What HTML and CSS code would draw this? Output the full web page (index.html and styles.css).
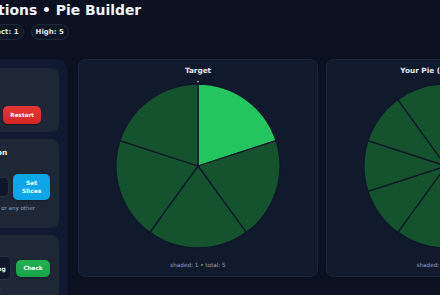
FILE: index.html
```html
<!DOCTYPE html>
<html lang="en">
<head>
<meta charset="utf-8">
<title>Equivalent Fractions • Pie Builder</title>
<link rel="stylesheet" href="styles.css">
</head>
<body>
<div class="app">
  <header class="top">
    <h1 class="title">Equivalent Fractions • Pie Builder</h1>
    <div class="pills">
      <span class="pill">Level: 1</span>
      <span class="pill">Score: 0</span>
      <span class="pill">Correct: 1</span>
      <span class="pill">High: 5</span>
    </div>
  </header>

  <div class="layout">
    <aside class="side">
      <section class="card card-controls">
        <h2 class="card-h">Controls</h2>
        <p class="muted">Build the target.</p>
        <div class="btn-row">
          <button class="btn btn-ghost">Hint</button>
          <button class="btn btn-red">Restart</button>
        </div>
      </section>

      <section class="card">
        <h2 class="card-h">Step 2: Slice Configuration</h2>
        <label class="muted label">Number of slices:</label>
        <div class="field-row">
          <div class="input"></div>
          <button class="btn btn-blue">Set Slices</button>
        </div>
        <p class="muted hint">Enter any whole number from 2 to 12, or any other count.</p>
      </section>

      <section class="card">
        <h2 class="card-h">Your Answer</h2>
        <div class="field-row check-row">
          <div class="status">Click on slices to start shading</div>
          <button class="btn btn-green">Check</button>
        </div>
        <p class="muted hint">Shade the same amount as the target.</p>
      </section>
    </aside>

    <main class="boards">
      <section class="board">
        <h3 class="board-h">Target</h3>
        <svg class="pie" width="172" height="172" viewBox="0 0 172 172">
          <g class="slices">
            <path class="on" d="M86 86 L86 4 A82 82 0 0 1 163.99 60.66 Z"/>
            <path class="off" d="M86 86 L163.99 60.66 A82 82 0 0 1 134.2 152.34 Z"/>
            <path class="off" d="M86 86 L134.2 152.34 A82 82 0 0 1 37.8 152.34 Z"/>
            <path class="off" d="M86 86 L37.8 152.34 A82 82 0 0 1 8.01 60.66 Z"/>
            <path class="off" d="M86 86 L8.01 60.66 A82 82 0 0 1 86 4 Z"/>
          </g>
          <circle class="tick" cx="86" cy="1.6" r="0.8"/>
        </svg>
        <p class="board-foot">shaded: 1 • total: 5</p>
      </section>

      <section class="board">
        <h3 class="board-h">Your Pie (equal slices)</h3>
        <svg class="pie" width="172" height="172" viewBox="0 0 172 172">
          <g class="slices">
            <path class="off" d="M86 86 L86 4 A82 82 0 0 1 134.2 19.66 Z"/>
            <path class="off" d="M86 86 L134.2 19.66 A82 82 0 0 1 163.99 60.66 Z"/>
            <path class="off" d="M86 86 L163.99 60.66 A82 82 0 0 1 163.99 111.34 Z"/>
            <path class="off" d="M86 86 L163.99 111.34 A82 82 0 0 1 134.2 152.34 Z"/>
            <path class="off" d="M86 86 L134.2 152.34 A82 82 0 0 1 86 168 Z"/>
            <path class="off" d="M86 86 L86 168 A82 82 0 0 1 37.8 152.34 Z"/>
            <path class="off" d="M86 86 L37.8 152.34 A82 82 0 0 1 8.01 111.34 Z"/>
            <path class="off" d="M86 86 L8.01 111.34 A82 82 0 0 1 8.01 60.66 Z"/>
            <path class="off" d="M86 86 L8.01 60.66 A82 82 0 0 1 37.8 19.66 Z"/>
            <path class="off" d="M86 86 L37.8 19.66 A82 82 0 0 1 86 4 Z"/>
          </g>
        </svg>
        <p class="board-foot">shaded: 0 • total: 10</p>
      </section>
    </main>
  </div>
</div>
</body>
</html>
```

FILE: styles.css
```css
html, body {
  margin: 0;
  padding: 0;
  overflow: hidden;
  background: #0b1120;
  height: 100%;
}

body {
  font-family: "DejaVu Sans", "Noto Sans", sans-serif;
  color: #e5e7eb;
}

.app {
  margin-left: -135px;
  padding: 2px 12px 0 12px;
  width: 689px;
}

.top {
  display: flex;
  flex-direction: column;
}

.title {
  margin: 0;
  font-size: 13.9px;
  line-height: 17px;
  font-weight: bold;
  color: #f1f5f9;
  white-space: nowrap;
}

.pills {
  display: flex;
  gap: 7px;
  margin-top: 5px;
}

.pill {
  display: inline-flex;
  align-items: center;
  height: 14px;
  padding: 0 4px;
  border: 1px solid #1e293b;
  border-radius: 9px;
  background: #0d1424;
  font-size: 7px;
  font-weight: bold;
  color: #e2e8f0;
  white-space: nowrap;
}

.layout {
  display: grid;
  grid-template-columns: 190px 488px;
  column-gap: 11px;
  margin-top: 19px;
  align-items: start;
}

.side {
  display: flex;
  flex-direction: column;
  gap: 7px;
  padding: 9px 8px 20px 8px;
  background: #0f1a30;
  border-radius: 10px;
  min-height: 300px;
}

.card {
  background: #1e2736;
  border-radius: 8px;
  padding: 9px 9px 8px 9px;
  display: flex;
  flex-direction: column;
}

.card-h {
  margin: 0;
  font-size: 7.5px;
  line-height: 9px;
  font-weight: bold;
  color: #f1f5f9;
  white-space: nowrap;
}

.card-controls .card-h {
  line-height: 10px;
}

.muted {
  margin: 0;
  font-size: 5.6px;
  line-height: 8px;
  color: #94a3b8;
}

.card-controls .muted {
  margin-top: 4px;
}

.btn-row {
  display: flex;
  justify-content: flex-end;
  gap: 4px;
  margin-top: 7px;
  padding-right: 9px;
}

.btn {
  font-family: "DejaVu Sans", "Noto Sans", sans-serif;
  font-weight: bold;
  font-size: 5.7px;
  color: #ffffff;
  border: none;
  border-radius: 5px;
  margin: 0;
  cursor: pointer;
}

.btn-row .btn {
  height: 18px;
  padding: 0 7px;
}

.btn-ghost {
  background: #334155;
}

.btn-red {
  background: linear-gradient(#e53535, #d42424);
  box-shadow: 0 1px 2px rgba(0, 0, 0, 0.35);
}

.label {
  margin-top: 4px;
}

.field-row {
  display: flex;
  align-items: center;
  gap: 4px;
  margin-top: 5px;
}

.input {
  flex: 1;
  height: 20px;
  background: #0f172a;
  border: 1px solid #243044;
  border-radius: 5px;
  box-sizing: border-box;
}

.btn-blue {
  width: 37px;
  height: 26px;
  padding: 0 5px;
  line-height: 8px;
  font-size: 5.9px;
  background: #0ea5e9;
  box-shadow: 0 1px 2px rgba(0, 0, 0, 0.3);
}

.hint {
  margin-top: 4px;
  font-size: 5.5px;
}

.check-row {
  margin-top: 3px;
  gap: 5px;
}

.status {
  flex: 1;
  height: 24px;
  box-sizing: border-box;
  background: #0f172a;
  border: 1px solid #243044;
  border-radius: 5px;
  display: flex;
  align-items: center;
  padding: 0 7px;
  font-size: 6px;
  font-weight: bold;
  color: #e2e8f0;
  white-space: nowrap;
  overflow: hidden;
}

.btn-green {
  width: 34px;
  height: 17px;
  padding: 0;
  background: linear-gradient(#22b24f, #16a34a);
  box-shadow: 0 1px 2px rgba(0, 0, 0, 0.3);
}

.boards {
  display: grid;
  grid-template-columns: 240px 240px;
  column-gap: 8px;
  align-items: start;
}

.board {
  background: #111a2d;
  border: 1px solid #1d2638;
  border-radius: 8px;
  padding: 6px 0 7px 0;
  display: flex;
  flex-direction: column;
  align-items: center;
  box-sizing: border-box;
  height: 218px;
}

.board-h {
  margin: 0;
  font-size: 7.3px;
  line-height: 10px;
  font-weight: bold;
  color: #e5e7eb;
  white-space: nowrap;
}

.pie {
  display: block;
  margin-top: 4px;
}

.slices path {
  stroke: #0f172a;
  stroke-width: 1.3;
  stroke-linejoin: round;
}

.slices .on {
  fill: #22c55e;
}

.slices .off {
  fill: #14532d;
}

.tick {
  fill: #cbd5e1;
}

.board-foot {
  margin: 9px 0 0 0;
  font-size: 5.7px;
  line-height: 8px;
  color: #94a3b8;
  white-space: nowrap;
}
```
